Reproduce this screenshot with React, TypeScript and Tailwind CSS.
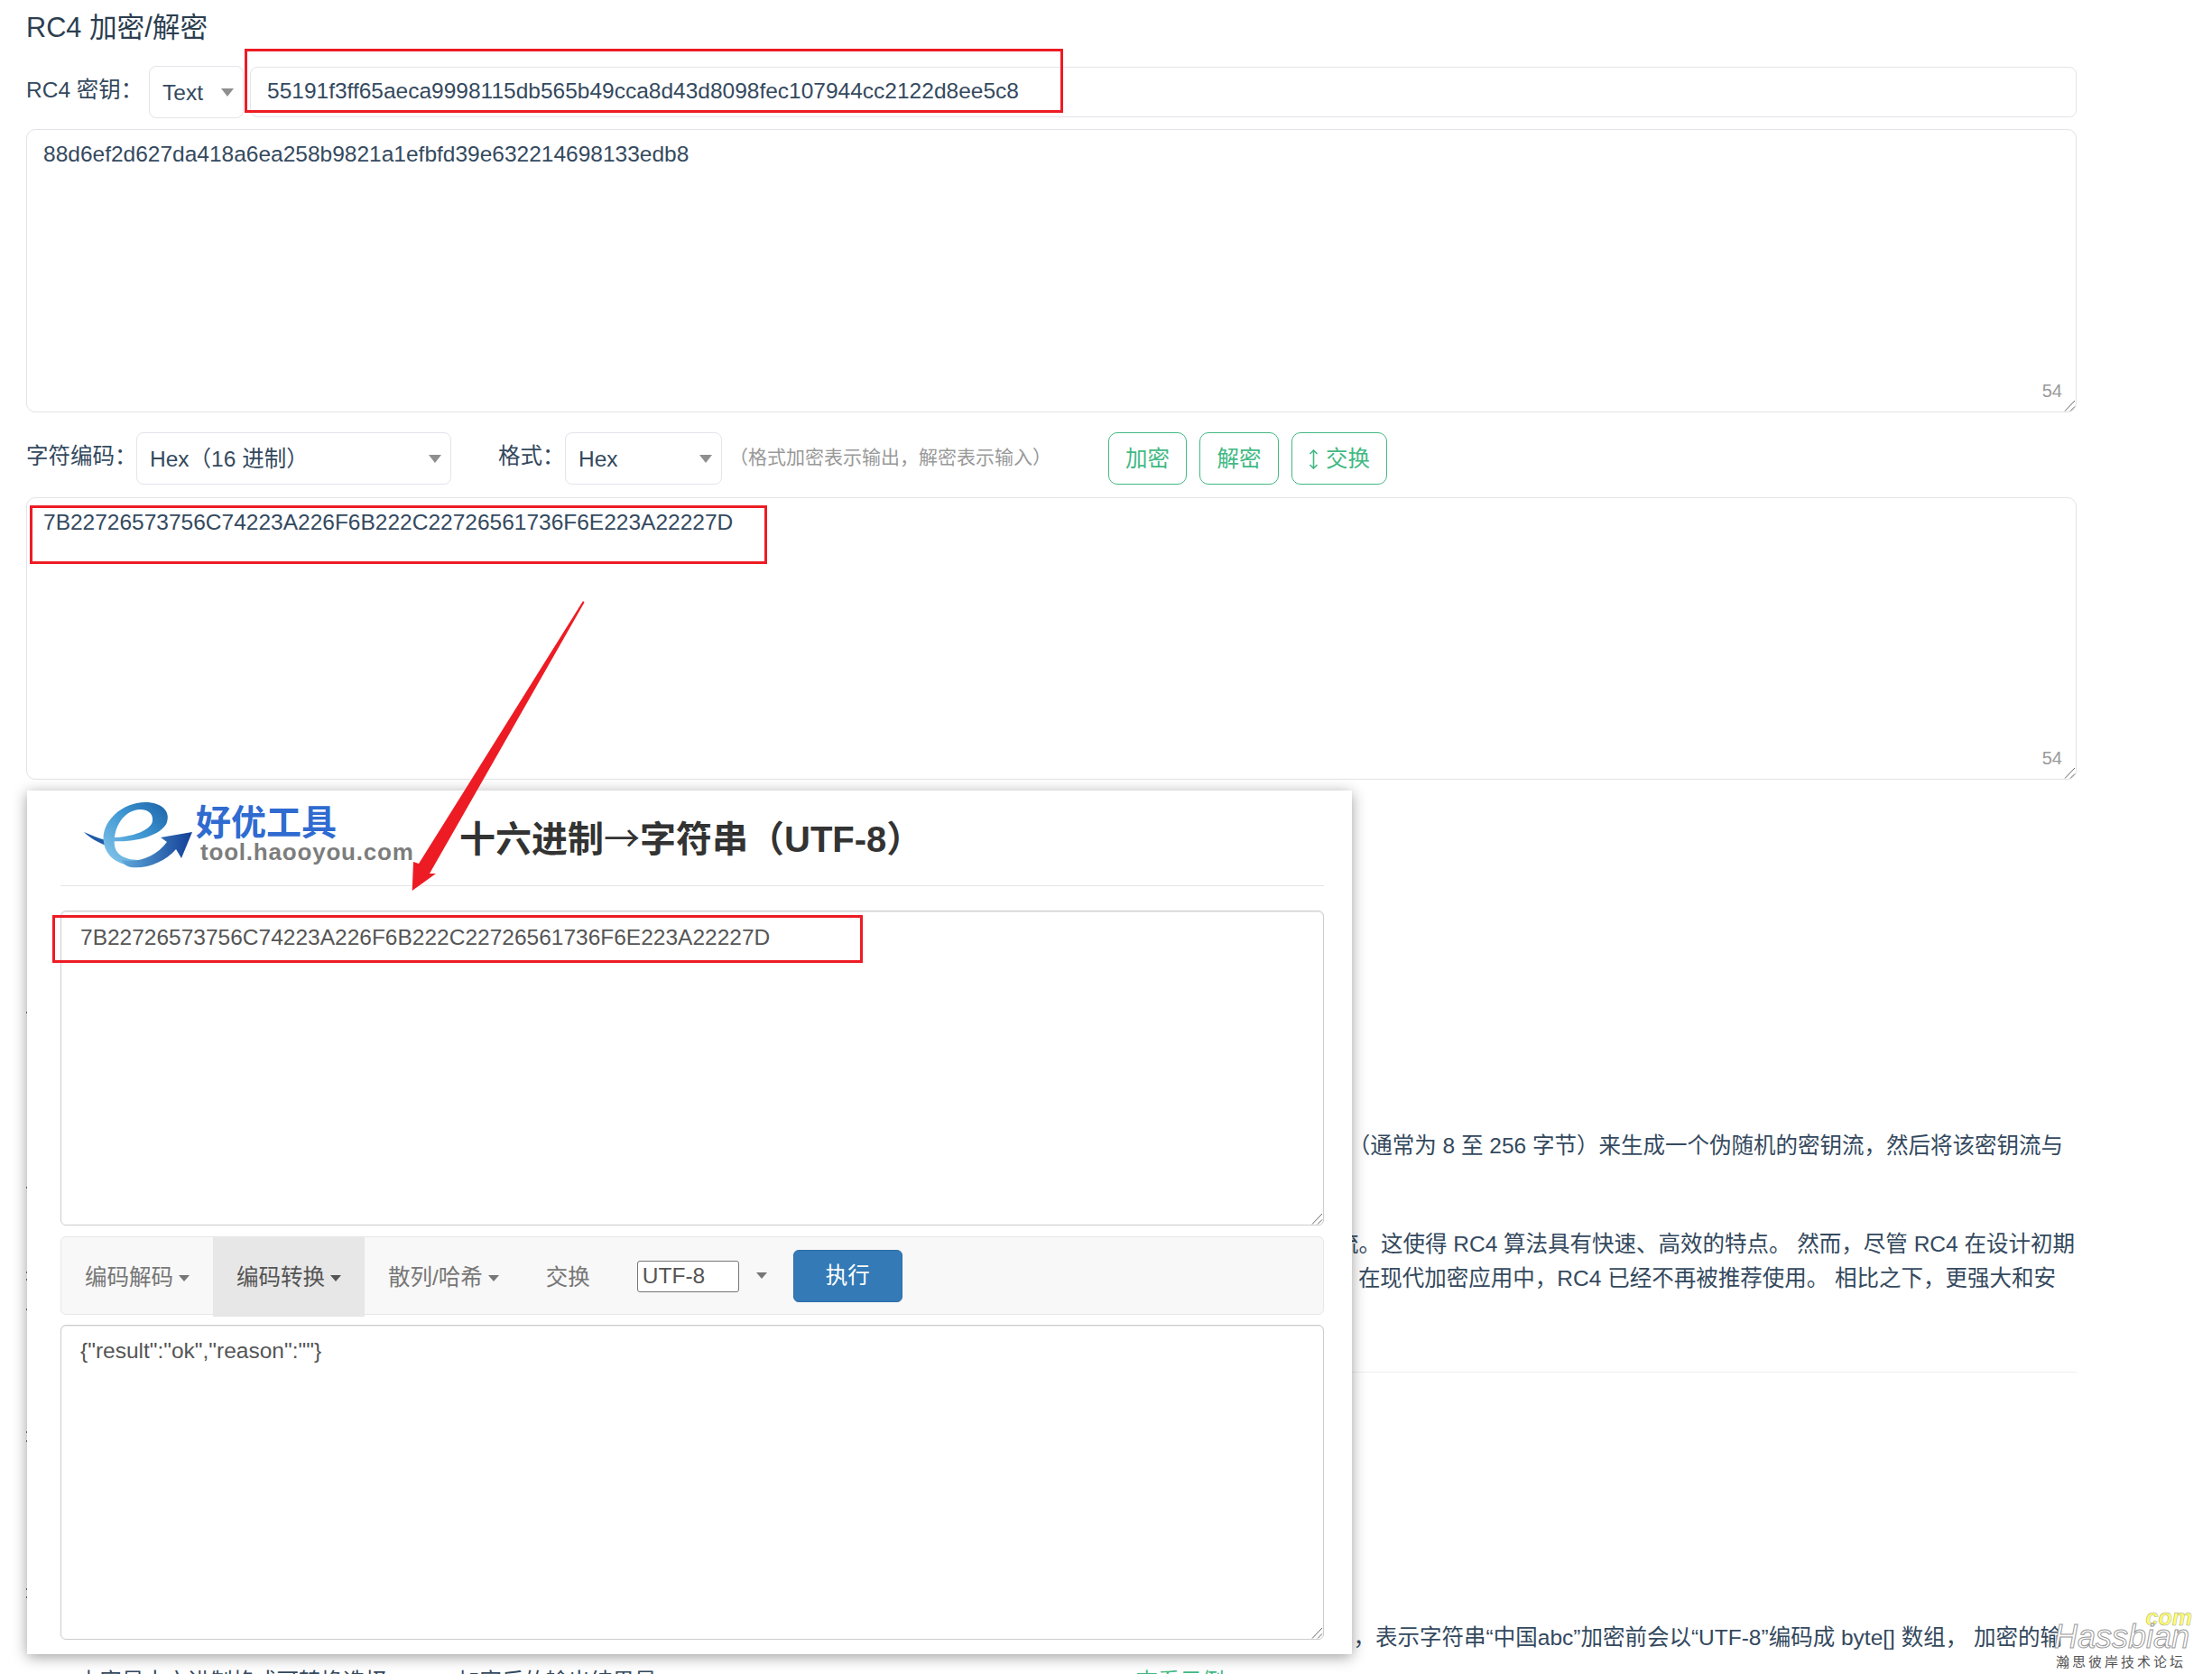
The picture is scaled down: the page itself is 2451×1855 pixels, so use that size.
const KEY = "55191f3ff65aeca9998115db565b49cca8d43d8098fec107944cc2122d8ee5c8";
const PLAIN = "88d6ef2d627da418a6ea258b9821a1efbfd39e632214698133edb8";
const HEX = "7B22726573756C74223A226F6B222C22726561736F6E223A22227D";
// first pixels of the page text that sticks out left of the pasted card
const TEXT_EDGE = [1121, 1315, 1409, 1417, 1450, 1586, 1596, 1760, 1769];

function Caret({ className }: { className: string }) {
  return <span className={`inline-block h-0 w-0 border-x-[6px] border-t-[7px] border-x-transparent ${className}`} />;
}

function Grip() {
  return (
    <svg width="13" height="13" viewBox="0 0 13 13" stroke="#666" strokeWidth="1" className="pointer-events-none absolute right-[1px] bottom-[1px]">
      <path d="M1 12.5 L12 1M7 12.5 L12 7.5" />
    </svg>
  );
}

function SelectBox({ value, className }: { value: string; className: string }) {
  return (
    <div className={`relative h-[58px] shrink-0 ${className}`}>
      <select
        defaultValue={value}
        className="h-full w-full appearance-none rounded-[8px] border border-[#e4e4ea] bg-white pt-[2px] pl-[14px] text-[#34495e]"
      >
        <option>{value}</option>
      </select>
      <span className="pointer-events-none absolute top-[25px] right-[11px] h-0 w-0 border-x-[7px] border-t-[9px] border-x-transparent border-t-[#8f8f8f]" />
    </div>
  );
}

function CountedArea({ value, height }: { value: string; height: string }) {
  return (
    <div className={`relative w-full ${height}`}>
      <textarea
        readOnly
        defaultValue={value}
        className="block h-full w-full resize-none rounded-[10px] border border-[#e2e2e8] bg-white px-[18px] pt-[9px] leading-[36px] text-[#34495e] outline-none"
      />
      <span className="absolute right-[16px] bottom-[14px] text-[20px] leading-[20px] text-[#999]">54</span>
      <Grip />
    </div>
  );
}

function GreenButton({ children, className }: { children: React.ReactNode; className: string }) {
  return (
    <button className={`flex h-[58px] items-center justify-center rounded-[10px] border border-[#42b983] pt-[2px] text-[#42b983] ${className}`}>
      {children}
    </button>
  );
}

function Logo() {
  return (
    <div className="ml-[26px] flex w-[363px] shrink-0 self-start pt-[11px]">
      <svg width="120" height="75" viewBox="0 0 120 75" className="shrink-0">
        <defs>
          <linearGradient id="ribbon" x1="0" y1="1" x2="1" y2="0">
            <stop offset="0" stopColor="#8ccbec" />
            <stop offset="0.55" stopColor="#3f97d2" />
            <stop offset="1" stopColor="#1b62a8" />
          </linearGradient>
          <linearGradient id="sweep" x1="0" y1="0" x2="1" y2="0">
            <stop offset="0" stopColor="#5fa8da" />
            <stop offset="1" stopColor="#123f96" />
          </linearGradient>
        </defs>
        <path d="M0 35 C8 38 16 42 24 44 L25 50 C14 46 6 41 0 35Z" fill="#1d5aa6" />
        <path
          d="M22 47 C18 24 42 2 68 2 C86 2 96 12 92 24 C88 37 60 47 33 45 L32 41 C52 41 76 33 76 22 C77 12 66 8 56 11 C42 15 32 32 34 50 C36 62 48 66 62 66 L56 72 C40 72 25 64 22 47Z"
          fill="url(#ribbon)"
        />
        <path
          d="M42 66 C60 70 80 62 92 46 L85 41 L120 35 L108 64 L102 54 C90 68 70 76 52 74 C47 73 44 71 42 66Z"
          fill="url(#sweep)"
        />
      </svg>
      <div className="ml-[4px] flex flex-col pt-[3px]">
        <span className="text-[39px] leading-[44px] font-bold text-[#2f6bd0]">好优工具</span>
        <span className="pl-[5px] text-[26px] leading-[20px] font-bold tracking-[0.8px] text-[#7d7d7d]">tool.haooyou.com</span>
      </div>
    </div>
  );
}

function NavItem({ label, active, caret = true }: { label: string; active?: boolean; caret?: boolean }) {
  return (
    <div
      className={`flex h-[88px] items-center gap-[6px] self-start px-[26px] pt-[2px] ${active ? "bg-[#e7e7e7] text-[#555]" : "text-[#777]"}`}
    >
      {label}
      {caret && <Caret className={active ? "border-t-[#555]" : "border-t-[#777]"} />}
    </div>
  );
}

function CardArea({ value, className, top }: { value: string; className: string; top: string }) {
  return (
    <div className={`relative h-[349px] shrink-0 ${className}`}>
      <textarea
        readOnly
        defaultValue={value}
        className={`block h-full w-full resize-none rounded-[6px] border border-[#ccc] bg-white px-[21px] leading-[36px] text-[#555] shadow-[inset_0_1px_1px_rgba(0,0,0,0.075)] outline-none ${top}`}
      />
      <Grip />
    </div>
  );
}

function ConverterCard() {
  return (
    <div className="absolute top-[876px] left-[30px] flex h-[957px] w-[1468px] flex-col bg-white pr-[31px] pl-[37px] shadow-[0_3px_15px_rgba(0,0,0,0.38)]">
      <header className="flex h-[106px] shrink-0 items-center border-b border-[#e5e5e5]">
        <Logo />
        <h1 className="ml-[53px] text-[40px] leading-none font-bold text-[#333]">
          十六进制<span className="font-['Noto_Sans_CJK_SC'] font-normal">→</span>字符串（UTF-8）
        </h1>
      </header>
      <CardArea value={HEX} className="mt-[27px]" top="pt-[11px]" />
      <nav className="mt-[12px] flex h-[87px] shrink-0 items-center rounded-[6px] border border-[#e7e7e7] bg-[#f8f8f8]">
        <NavItem label="编码解码" />
        <NavItem label="编码转换" active />
        <NavItem label="散列/哈希" />
        <NavItem label="交换" caret={false} />
        <input
          readOnly
          defaultValue="UTF-8"
          className="mt-[2px] ml-[26px] h-[35px] w-[113px] rounded-[3px] border border-[#767676] bg-white pl-[5px] text-[#555]"
        />
        <Caret className="ml-[19px] border-t-[#777]" />
        <button className="ml-[29px] h-[58px] w-[121px] rounded-[6px] border border-[#2e6da4] bg-[#337ab7] pt-[2px] text-white">执行</button>
      </nav>
      <CardArea value={'{"result":"ok","reason":""}'} className="mt-[11px]" top="pt-[10px]" />
    </div>
  );
}

function Watermark() {
  return (
    <div className="absolute top-[1785px] left-[2276px] flex w-[156px] flex-col">
      <span className="self-end pr-[3px] text-[25px] leading-[14px] font-bold text-[#ffff66] italic [-webkit-text-stroke:0.5px_#aaa]">com</span>
      <span className="text-[36px] leading-[30px] text-white italic [-webkit-text-stroke:1px_#999]">Hassbian</span>
      <span className="mt-[4px] pl-[2px] text-[15px] leading-[18px] tracking-[3px] text-[#555]">瀚思彼岸技术论坛</span>
    </div>
  );
}

export default function App() {
  return (
    <div className="relative h-[1855px] w-[2451px] overflow-hidden bg-white font-['Liberation_Sans','Noto_Sans_CJK_SC',sans-serif] text-[24.5px] text-[#34495e]">
      <div className="w-[2301px] pl-[29px]">
        <h2 className="flex h-[60px] items-center pt-[2px] text-[30.7px] text-[#2c3e50]">RC4 加密/解密</h2>

        <div className="mt-[13px] flex items-center">
          <label className="mb-[4px] w-[136px] shrink-0">RC4 密钥：</label>
          <SelectBox value="Text" className="w-[105px]" />
          <input
            readOnly
            defaultValue={KEY}
            className="ml-[7px] h-[56px] flex-1 rounded-[8px] border border-[#e4e4ea] bg-white pb-[2px] pl-[18px] text-[#34495e]"
          />
        </div>

        <div className="mt-[12px]">
          <CountedArea value={PLAIN} height="h-[314px]" />
        </div>

        <div className="mt-[22px] flex items-center">
          <label className="mb-[4px] w-[122px] shrink-0 whitespace-nowrap">字符编码：</label>
          <SelectBox value="Hex（16 进制）" className="w-[349px]" />
          <label className="mb-[4px] ml-[52px] w-[74px] shrink-0 whitespace-nowrap">格式：</label>
          <SelectBox value="Hex" className="w-[174px]" />
          <span className="mb-[2px] ml-[8px] w-[334px] shrink-0 text-[21px] whitespace-nowrap text-[#999]">（格式加密表示输出，解密表示输入）</span>
          <div className="ml-[86px] flex gap-[14px]">
            <GreenButton className="w-[87px]">加密</GreenButton>
            <GreenButton className="w-[88px]">解密</GreenButton>
            <GreenButton className="w-[106px] gap-[8px]">
              <svg width="11" height="22" viewBox="0 0 11 22" fill="none" stroke="currentColor" strokeWidth="1.6">
                <path d="M5.5 1v20M1.5 5l4-4 4 4M1.5 17l4 4 4-4" />
              </svg>
              交换
            </GreenButton>
          </div>
        </div>

        <div className="mt-[14px]">
          <CountedArea value={HEX} height="h-[313px]" />
        </div>

        <div className="mt-[387px] leading-[38px] whitespace-nowrap">
          <p className="pr-[15px] text-right">（通常为 8 至 256 字节）来生成一个伪随机的密钥流，然后将该密钥流与</p>
          <p className="mt-[71px] pr-[2px] text-right">流。这使得 RC4 算法具有快速、高效的特点。 然而，尽管 RC4 在设计初期</p>
          <p className="pr-[23px] text-right">在现代加密应用中，RC4 已经不再被推荐使用。 相比之下，更强大和安</p>
          <div className="mt-[84px] ml-[1469px] border-t border-[#eee]" />
          <p className="mt-[275px] pr-[16px] text-right">，表示字符串“中国abc”加密前会以“UTF-8”编码成 byte[] 数组， 加密的输</p>
          <div className="mt-[11px] flex pl-[57px]">
            <span>内容是十六进制格式可转换选择</span>
            <span className="ml-[78px]">加密后的输出结果是</span>
            <span className="ml-[531px] text-[#42b983]">查看示例</span>
          </div>
        </div>
      </div>

      {TEXT_EDGE.map((y) => (
        <span key={y} className="absolute left-[29px] h-[2px] w-[1px] bg-[#8a6a70]" style={{ top: y }} />
      ))}

      <ConverterCard />

      {/* annotations drawn over the screenshot */}
      <div className="absolute top-[54px] left-[271px] h-[71px] w-[907px] border-[3px] border-[#ed1c24]" />
      <div className="absolute top-[560px] left-[33px] h-[65px] w-[817px] border-[3px] border-[#ed1c24]" />
      <div className="absolute top-[1014px] left-[58px] h-[53px] w-[898px] border-[3px] border-[#ed1c24]" />
      <svg width="230" height="350" viewBox="0 0 230 350" className="absolute top-[650px] left-[440px]">
        <path d="M16.7 337 L18 305 L24 307 L206 16 L207.5 17.5 L36 318 L43 318Z" fill="#ed1c24" />
      </svg>

      <Watermark />
    </div>
  );
}
